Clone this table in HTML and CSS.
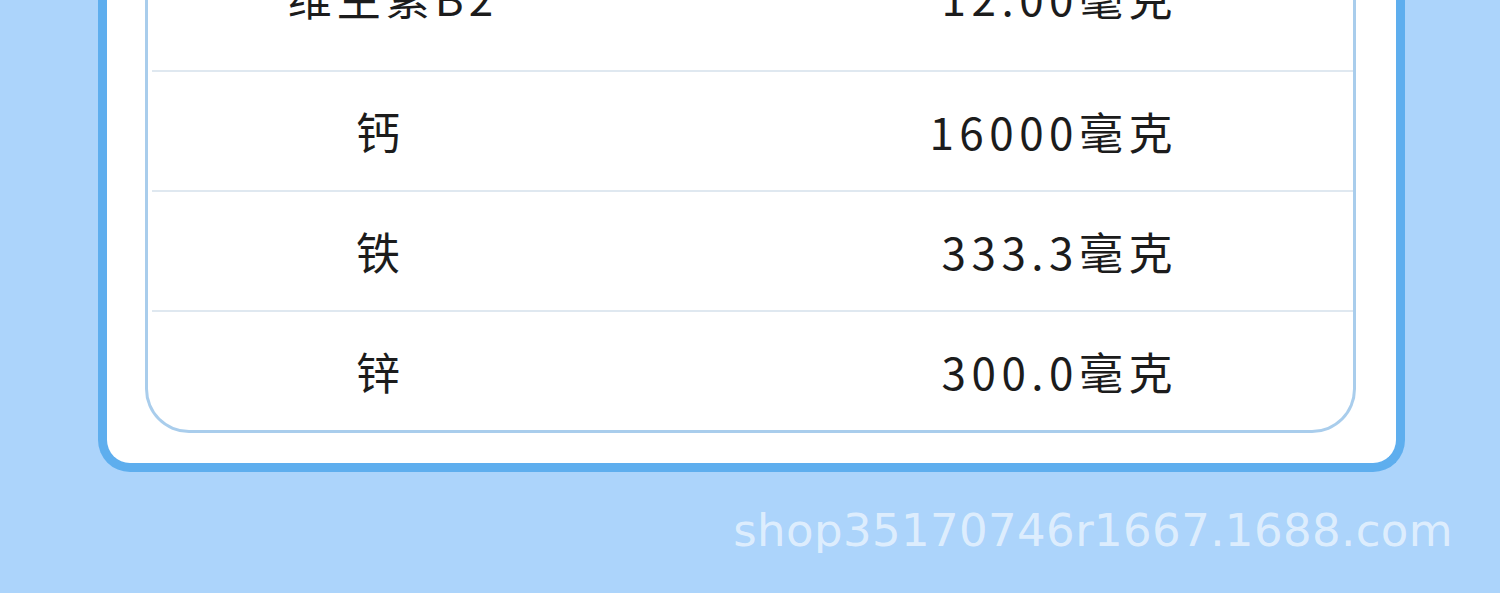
FILE: index.html
```html
<!DOCTYPE html>
<html lang="zh-CN">

<head>
  <meta charset="UTF-8">
  <title>营养成分</title>
  <link rel="stylesheet" href="styles.css">
</head>

<body>
  <div class="card">
    <div class="table">
      <div class="row row-first">
        <span class="name">维生素B2</span>
        <span class="val">12.00毫克</span>
      </div>
      <div class="row">
        <span class="name">钙</span>
        <span class="val">16000毫克</span>
      </div>
      <div class="row">
        <span class="name">铁</span>
        <span class="val">333.3毫克</span>
      </div>
      <div class="row row-last">
        <span class="name">锌</span>
        <span class="val">300.0毫克</span>
      </div>
    </div>
  </div>
  <div class="mark">shop35170746r1667.1688.com</div>
</body>

</html>
```

FILE: styles.css
```css
body {
  margin: 0;
  background-color: #acd4fb;
  overflow: hidden;
}

.card {
  margin: -76px 0 0 98px;
  width: 1307px;
  box-sizing: border-box;
  background-color: #fff;
  border: 9px solid #5eaeee;
  border-top: none;
  border-radius: 0 0 32px 32px;
  padding: 0 40px 30px 38px;
}

.table {
  border: 3px solid #a9cdec;
  border-top: none;
  border-radius: 0 0 44px 44px;
  overflow: hidden;
}

.row {
  display: grid;
  grid-template-columns: 452px 1fr;
  align-items: center;
  height: 118px;
  margin-left: 4px;
  border-bottom: 2px solid #dfe8f0;
  font: 44px/58px "Noto Sans CJK SC", sans-serif;
  letter-spacing: 5px;
  color: #1c1c1c;
}

.row-first {
  height: 146px;
}

.row-last {
  border-bottom: none;
}

.name {
  text-align: center;
  padding-left: 5px;
}

.row-first .name {
  padding-left: 30px;
}

.val {
  text-align: right;
  padding-right: 175px;
  letter-spacing: 5.5px;
}

.mark {
  margin-top: 36px;
  padding-right: 47px;
  text-align: right;
  font: 45px/1 "DejaVu Sans", sans-serif;
  letter-spacing: 0.4px;
  color: rgba(255, 255, 255, 0.62);
}
```
